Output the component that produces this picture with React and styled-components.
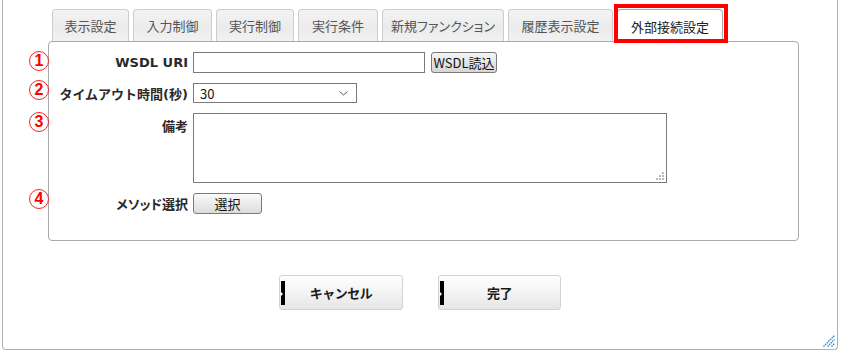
import React from 'react';
import styled, { createGlobalStyle } from 'styled-components';

const GlobalStyle = createGlobalStyle`
  body {
    margin: 0;
    background: #fff;
    font-family: "Noto Sans CJK JP", "Noto Sans", sans-serif;
    color: #222;
  }
`;

const Frame = styled.div`
  position: relative;
  box-sizing: border-box;
  width: 836px;
  height: 350px;
  margin-left: 2px;
  padding-top: 9px;
  border: 1px solid #b0b0b0;
  border-top: none;
  border-radius: 0 0 4px 4px;
`;

const Body = styled.div`
  margin-left: 45px;
`;

const TabBar = styled.div`
  display: flex;
  align-items: flex-end;
  gap: 4px;
  padding-left: 4px;
`;

const Tab = styled.div`
  position: relative;
  box-sizing: border-box;
  width: ${p => p.$w}px;
  height: ${p => (p.$active ? 33 : 32)}px;
  margin-bottom: ${p => (p.$active ? -1 : 0)}px;
  z-index: ${p => (p.$active ? 1 : 0)};
  display: flex;
  align-items: center;
  justify-content: center;
  border: 1px solid ${p => (p.$active ? '#aaa' : '#cdcdcd')};
  border-bottom: none;
  border-radius: 4px 4px 0 0;
  background: ${p => (p.$active ? '#fff' : 'linear-gradient(#f3f3f3, #ebebeb 60%, #f2f2f2)')};
  color: ${p => (p.$active ? '#222' : '#555')};
  font-size: 13px;
  white-space: nowrap;
  font-feature-settings: ${p => (p.$narrow ? '"palt"' : 'normal')};

  ${p =>
    p.$active &&
    `
    &::after {
      content: '';
      position: absolute;
      left: -4px;
      right: -6px;
      top: -6px;
      bottom: -1px;
      border: 4px solid #ff0000;
    }
  `}
`;

const Panel = styled.div`
  box-sizing: border-box;
  width: 751px;
  height: 200px;
  padding-top: 10px;
  border: 1px solid #aaa;
  border-radius: 4px;
  display: flex;
  flex-direction: column;
  gap: 10px;
`;

const Row = styled.div`
  position: relative;
  display: grid;
  grid-template-columns: 139px auto;
  column-gap: 5px;
  align-items: ${p => (p.$top ? 'start' : 'center')};
  justify-content: start;
`;

const Badge = styled.span`
  position: absolute;
  left: -20px;
  top: ${p => p.$top}px;
  box-sizing: border-box;
  width: 20px;
  height: 20px;
  border: 1px solid #ff2020;
  border-radius: 50%;
  display: flex;
  align-items: center;
  justify-content: center;
  color: #ff0000;
  font-family: "Liberation Sans", sans-serif;
  font-weight: bold;
  font-size: 16px;
  line-height: 1;
`;

const Label = styled.span`
  text-align: right;
  font-family: "DejaVu Sans", "Noto Sans CJK JP", sans-serif;
  font-size: 13px;
  font-weight: bold;
  color: #2a2a2a;
  white-space: nowrap;
  padding-top: ${p => (p.$top ? 3 : 0)}px;
  font-feature-settings: ${p => (p.$narrow ? '"palt"' : 'normal')};
`;

const Field = styled.div`
  display: flex;
  align-items: center;
  gap: 6px;
`;

const TextInput = styled.input`
  box-sizing: border-box;
  width: 232px;
  height: 21px;
  border: 1px solid #7a7a7a;
  padding: 0 4px;
  font-size: 13px;
`;

const GreyButton = styled.button`
  box-sizing: border-box;
  width: ${p => p.$w}px;
  height: 21px;
  padding: 0;
  border: 1px solid #7a7a7a;
  border-radius: 3px;
  background: ${p => (p.$light ? 'linear-gradient(#fafafa, #dcdcdc)' : 'linear-gradient(#f4f4f4, #d6d6d6)')};
  font-family: "Noto Sans CJK JP", sans-serif;
  font-size: 13px;
  line-height: 19px;
  color: #111;
`;

const SelectBox = styled.div`
  box-sizing: border-box;
  width: 164px;
  height: 20px;
  border: 1px solid #7a7a7a;
  display: flex;
  align-items: center;
  justify-content: space-between;
  padding: 0 8px 0 6px;
  font-size: 13px;
  color: #111;
`;

const AreaWrap = styled.div`
  position: relative;
  width: 474px;
  height: 70px;
`;

const TextArea = styled.textarea`
  box-sizing: border-box;
  width: 100%;
  height: 100%;
  border: 1px solid #7a7a7a;
  resize: none;
  display: block;
  font-size: 13px;
`;

const Grip = styled.svg`
  position: absolute;
  right: 3px;
  bottom: 3px;
`;

const Actions = styled.div`
  display: flex;
  justify-content: center;
  gap: 35px;
  margin-top: 34px;
`;

const ActionButton = styled.button`
  position: relative;
  box-sizing: border-box;
  width: ${p => p.$w}px;
  height: 35px;
  border: 1px solid #d2d2d2;
  border-radius: 3px;
  background: linear-gradient(#ffffff, #f3f3f3 50%, #e6e6e6);
  font-family: "Noto Sans CJK JP", sans-serif;
  font-size: 13px;
  font-weight: bold;
  color: #1a1a1a;
  letter-spacing: -0.5px;

  &::before {
    content: '';
    position: absolute;
    left: 1px;
    top: 5px;
    bottom: 4px;
    width: 4px;
    background: #000;
  }

  &::after {
    content: '';
    position: absolute;
    left: 1px;
    top: 16px;
    border-left: 2px solid #fff;
    border-top: 2px solid transparent;
    border-bottom: 2px solid transparent;
  }
`;

const CornerGrip = styled.svg`
  position: absolute;
  right: 2px;
  bottom: 2px;
`;

const tabs = [
  { label: '表示設定', w: 77 },
  { label: '入力制御', w: 79 },
  { label: '実行制御', w: 78 },
  { label: '実行条件', w: 80 },
  { label: '新規ファンクション', w: 122, narrow: true },
  { label: '履歴表示設定', w: 105 },
  { label: '外部接続設定', w: 106, active: true },
];

const App = () => (
  <>
    <GlobalStyle />
    <Frame>
      <Body>
        <TabBar>
          {tabs.map(t => (
            <Tab key={t.label} $w={t.w} $active={t.active} $narrow={t.narrow}>
              {t.label}
            </Tab>
          ))}
        </TabBar>
        <Panel>
          <Row>
            <Badge $top={-1}>1</Badge>
            <Label>WSDL URI</Label>
            <Field>
              <TextInput type="text" />
              <GreyButton $w={66}>WSDL読込</GreyButton>
            </Field>
          </Row>
          <Row>
            <Badge $top={-3}>2</Badge>
            <Label>タイムアウト時間(秒)</Label>
            <SelectBox>
              <span>30</span>
              <svg width="9" height="5" viewBox="0 0 9 5">
                <path d="M0.5 0.5 L4.5 4 L8.5 0.5" fill="none" stroke="#555" strokeWidth="1" />
              </svg>
            </SelectBox>
          </Row>
          <Row $top>
            <Badge $top={-1}>3</Badge>
            <Label $top>備考</Label>
            <AreaWrap>
              <TextArea />
              <Grip width="8" height="8" viewBox="0 0 8 8">
                <rect x="6" y="0" width="2" height="2" fill="#bbb" />
                <rect x="3" y="3" width="2" height="2" fill="#bbb" />
                <rect x="6" y="3" width="2" height="2" fill="#bbb" />
                <rect x="0" y="6" width="2" height="2" fill="#bbb" />
                <rect x="3" y="6" width="2" height="2" fill="#bbb" />
                <rect x="6" y="6" width="2" height="2" fill="#bbb" />
              </Grip>
            </AreaWrap>
          </Row>
          <Row>
            <Badge $top={-4}>4</Badge>
            <Label $narrow>メソッド選択</Label>
            <Field>
              <GreyButton $w={69} $light>選択</GreyButton>
            </Field>
          </Row>
        </Panel>
      </Body>
      <Actions>
        <ActionButton $w={124}>キャンセル</ActionButton>
        <ActionButton $w={123}>完了</ActionButton>
      </Actions>
      <CornerGrip width="12" height="12" viewBox="0 0 12 12">
        <path d="M0.5 11.5 L11.5 0.5 M4.5 11.5 L11.5 4.5 M8.5 11.5 L11.5 8.5" stroke="#0f86d6" strokeWidth="1.3" strokeDasharray="1.5 0.8" />
      </CornerGrip>
    </Frame>
  </>
);

export default App;
